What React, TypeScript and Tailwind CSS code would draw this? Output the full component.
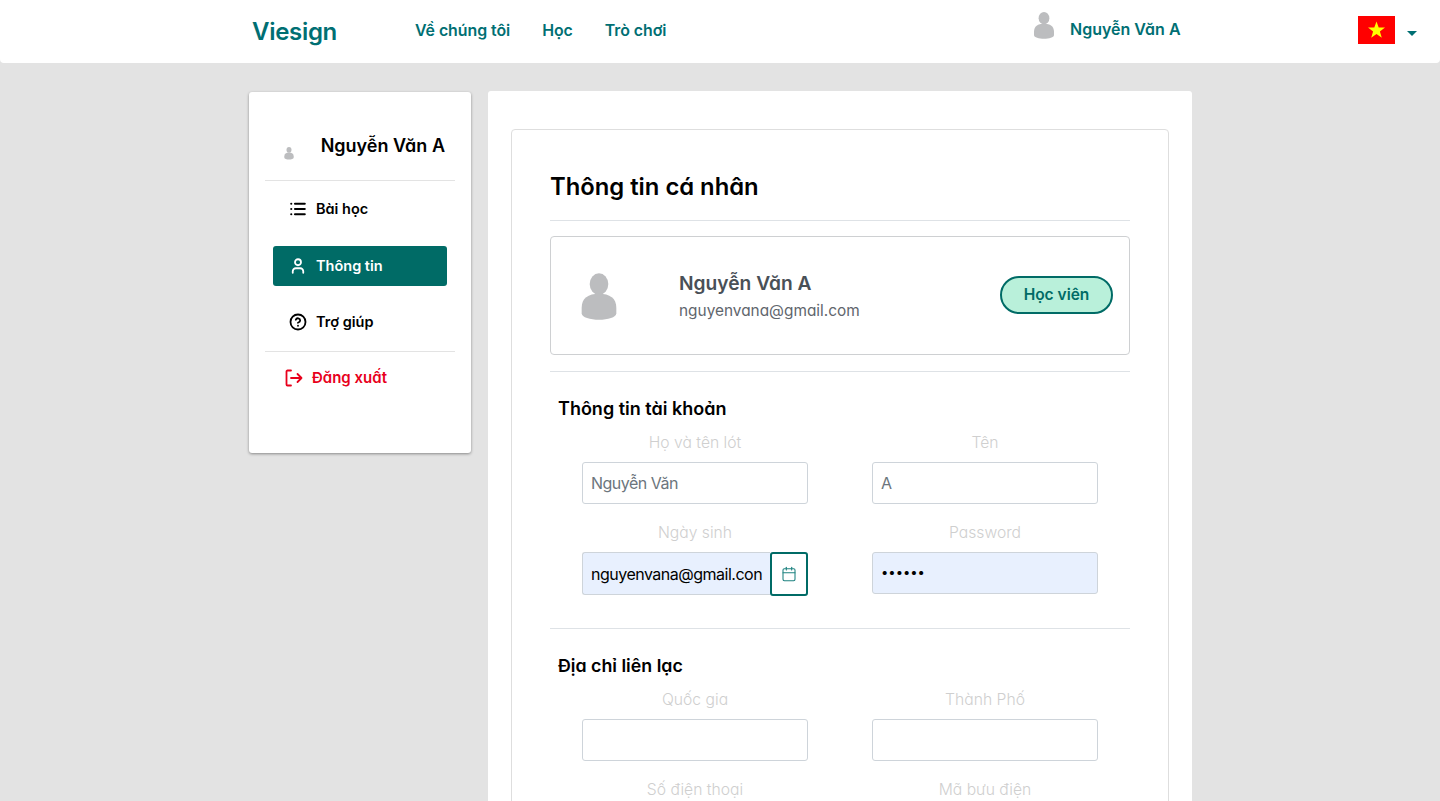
import React from "react";
import { List, User, CircleHelp, Calendar } from "lucide-react";

const font = "[font-family:Inter,'Noto_Sans',sans-serif] [font-feature-settings:'cv11']";

function Avatar({ size, className = "" }: { size: number; className?: string }) {
  return (
    <svg width={size} height={size} viewBox="0 0 48 48" className={`shrink-0 ${className}`} aria-hidden="true">
      <ellipse cx="24" cy="13" rx="8.6" ry="10" fill="#bcbdbf" />
      <path d="M8 35c0-9 6-13 16-13s16 4 16 13v5c0 4-8 6-16 6s-16-2-16-6z" fill="#bcbdbf" />
    </svg>
  );
}

function Flag() {
  return (
    <svg width="37" height="28" viewBox="0 0 37 28" className="-mt-[4px] shrink-0" aria-hidden="true">
      <rect width="37" height="28" fill="#ff0000" />
      <polygon points="18.5,5.5 20.7,11.6 27,11.6 21.9,15.5 23.8,21.8 18.5,18 13.2,21.8 15.1,15.5 10,11.6 16.3,11.6" fill="#ffff00" />
    </svg>
  );
}

function Field({ label, value, tone, dots }: { label: string; value?: string; tone?: "filled"; dots?: boolean }) {
  return (
    <div className="w-[226px] flex flex-col items-center">
      <div className="h-[20px] leading-[20px] text-[15.7px] text-[#cfcfcf] font-light">{label}</div>
      <div
        className={`mt-[9px] w-full h-[42px] border border-[#ced4da] rounded-[3px] px-[8px] flex items-center [font-family:Inter,sans-serif] [font-feature-settings:normal] ${
          dots ? "text-[13px] tracking-normal" : "text-[16px] tracking-[-0.5px]"
        } ${tone === "filled" ? "bg-[#e8f0fe] text-black" : "bg-white text-[#6c757d]"}`}
      >
        {value}
      </div>
    </div>
  );
}

function DateField() {
  return (
    <div className="w-[226px] flex flex-col items-center">
      <div className="h-[20px] leading-[20px] text-[15.7px] text-[#cfcfcf] font-light">Ngày sinh</div>
      <div className="mt-[9px] w-full h-[44px] flex">
        <div className="flex-1 min-w-0 h-[43px] bg-[#e8f0fe] border border-[#ced4da] border-r-0 rounded-l-[3px] pl-[8px] flex items-center text-[16px] tracking-[-0.5px] text-black whitespace-nowrap [font-family:Inter,sans-serif] [font-feature-settings:normal]">
          nguyenvana@gmail.con
        </div>
        <div className="w-[38px] h-[44px] border-2 border-[#006b66] rounded-[3px] bg-white flex items-center justify-center shrink-0">
          <Calendar size={16} strokeWidth={1.6} className="text-[#1e8280]" />
        </div>
      </div>
    </div>
  );
}

function Row({ children, className = "" }: { children: React.ReactNode; className?: string }) {
  return <div className={`flex pl-[32px] gap-[64px] ${className}`}>{children}</div>;
}

function NavItem({ icon, label, active, className = "" }: { icon: React.ReactNode; label: string; active?: boolean; className?: string }) {
  return (
    <div
      className={`mx-[8px] h-[40px] rounded-[3px] flex items-center pl-[16px] gap-[9px] text-[14.5px] font-semibold ${
        active ? "bg-[#006b66] text-white" : "text-black"
      } ${className}`}
    >
      {icon}
      <span>{label}</span>
    </div>
  );
}

export default function App() {
  return (
    <div className={`h-[801px] overflow-hidden bg-[#e3e3e3] ${font}`}>
      <header className="h-[63px] bg-white rounded-b-[4px] flex items-center">
        <div className="ml-[252px] w-[163px] text-[24px] font-semibold tracking-[-0.3px] text-[#006f73] leading-none">Viesign</div>
        <nav className="w-[250px] -mt-[1px] flex gap-[32px] text-[15.9px] tracking-[-0.05px] font-semibold text-[#006f73] whitespace-nowrap">
          <span>Về chúng tôi</span>
          <span>Học</span>
          <span>Trò chơi</span>
        </nav>
        <div className="ml-[368px] flex items-center gap-[11px] w-[325px] -mt-[6px]">
          <Avatar size={30} className="-ml-[4px] -mt-[7px]" />
          <span className="text-[16px] font-semibold text-[#006f73]">Nguyễn Văn A</span>
        </div>
        <Flag />
        <div className="ml-[12px] mt-[4px] w-0 h-0 border-x-[5px] border-x-transparent border-t-[5px] border-t-[#006f73]" />
      </header>

      <main className="flex items-start gap-[17px] ml-[249px] mt-[29px]">
        <aside className="w-[222px] h-[361px] bg-white rounded-[3px] shadow-[0_1px_3px_rgba(0,0,0,0.4)] px-[16px] shrink-0">
          <div className="h-[89px] border-b border-[#e3e3e3] relative">
            <Avatar size={14} className="absolute left-[17px] top-[54px]" />
            <span className="absolute right-[10px] top-[42px] text-[18px] leading-[24px] font-semibold text-black whitespace-nowrap">Nguyễn Văn A</span>
          </div>
          <div className="mt-[8px] flex flex-col">
            <NavItem icon={<List size={18} strokeWidth={2.8} />} label="Bài học" />
            <NavItem active className="mt-[17px]" icon={<User size={18} strokeWidth={2.4} />} label="Thông tin" />
            <NavItem className="mt-[16px]" icon={<CircleHelp size={18} strokeWidth={2.4} />} label="Trợ giúp" />
          </div>
          <div className="mt-[9px] border-t border-[#e3e3e3] pt-[6px]">
            <div className="h-[40px] pl-[20px] flex items-center gap-[9px] text-[15px] font-semibold text-[#e8001c]">
              <svg width="18" height="18" viewBox="0 0 18 18" fill="none" stroke="currentColor" strokeWidth="1.8" strokeLinecap="round" strokeLinejoin="round" aria-hidden="true">
                <path d="M6 1.5H2.5a1 1 0 0 0-1 1v13a1 1 0 0 0 1 1H6" />
                <path d="M6 9h10.5M12.5 5l4 4-4 4" />
              </svg>
              <span>Đăng xuất</span>
            </div>
          </div>
        </aside>

        <section className="-mt-[1px] w-[704px] h-[761px] bg-white rounded-[3px] px-[23px] pt-[38px] shrink-0">
          <div className="border border-[#dedede] rounded-[4px] px-[38px] h-[900px]">
            <h1 className="mt-[43px] h-[47px] text-[23.8px] leading-[28px] font-semibold text-black">Thông tin cá nhân</h1>
            <div className="border-t border-[#dee2e6]" />
            <div className="mt-[15px] h-[119px] border border-[#ced0d2] rounded-[4px] flex items-center pl-[22px] pr-[16px]">
              <Avatar size={52} />
              <div className="ml-[54px] flex-1 mt-[1px]">
                <div className="text-[19.2px] leading-[24px] font-semibold text-[#495057]">Nguyễn Văn A</div>
                <div className="mt-[5px] text-[15.4px] leading-[22px] text-[#5f666d] font-normal">nguyenvana@gmail.com</div>
              </div>
              <div className="-mt-[2px] w-[113px] h-[38px] pt-[1px] rounded-full bg-[#b9f0da] border-2 border-[#006b66] flex items-center justify-center text-[15.5px] font-semibold text-[#006b66]">Học viên</div>
            </div>
            <div className="mt-[16px] border-t border-[#dee2e6]" />

            <h2 className="mt-[26px] pl-[8px] text-[18px] leading-[22px] font-semibold text-black">Thông tin tài khoản</h2>
            <Row className="mt-[13px]">
              <Field label="Họ và tên lót" value="Nguyễn Văn" />
              <Field label="Tên" value="A" />
            </Row>
            <Row className="mt-[19px]">
              <DateField />
              <Field label="Password" value="••••••" tone="filled" dots />
            </Row>
            <div className="mt-[32px] border-t border-[#dee2e6]" />

            <h2 className="mt-[26px] pl-[8px] text-[17.8px] leading-[22px] font-semibold text-black">Địa chỉ liên lạc</h2>
            <Row className="mt-[13px]">
              <Field label="Quốc gia" />
              <Field label="Thành Phố" />
            </Row>
            <Row className="mt-[19px]">
              <Field label="Số điện thoại" />
              <Field label="Mã bưu điện" />
            </Row>
          </div>
        </section>
      </main>
    </div>
  );
}
